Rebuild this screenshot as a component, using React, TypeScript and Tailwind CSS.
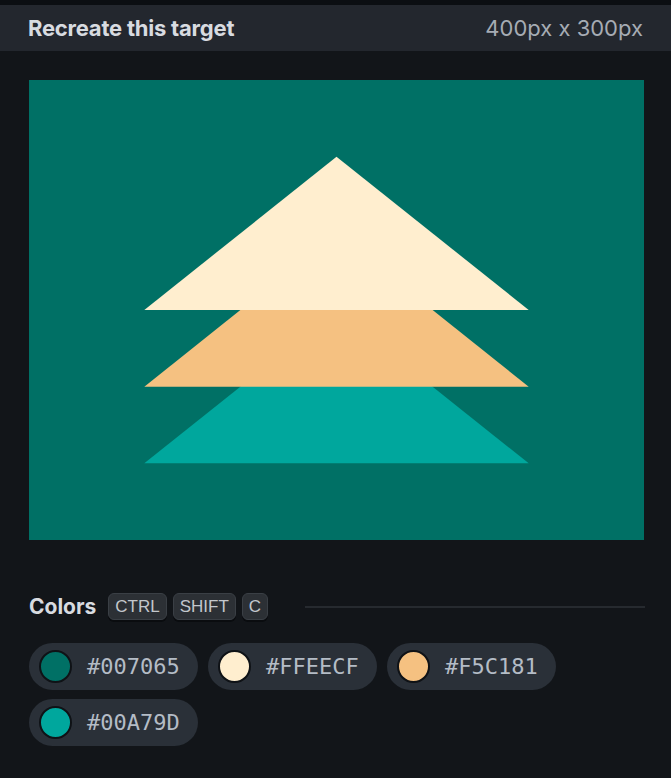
const colors = ["#007065", "#FFEECF", "#F5C181", "#00A79D"];

const keys = ["CTRL", "SHIFT", "C"];

const Target = () => (
  <svg
    viewBox="0 0 400 300"
    preserveAspectRatio="none"
    className="block w-[615px] h-[460px]"
  >
    <rect width="400" height="300" fill="#007065" />
    <polygon points="200,150 325,250 75,250" fill="#00A79D" />
    <polygon points="200,100 325,200 75,200" fill="#F5C181" />
    <polygon points="200,50 325,150 75,150" fill="#FFEECF" />
  </svg>
);

const Swatch = ({ hex }: { hex: string }) => (
  <div className="flex items-center h-[47px] w-[169px] pl-[10px] rounded-full bg-[#2a3038]">
    <span
      className="w-[33px] h-[33px] rounded-full border-2 border-[#0f1216]"
      style={{ backgroundColor: hex }}
    />
    <span className="ml-[15px] font-['DejaVu_Sans_Mono',monospace] text-[22px] text-[#b4bcc6]">
      {hex}
    </span>
  </div>
);

export default function App() {
  return (
    <div className="w-[671px] h-[778px] bg-[#121519] font-['Inter',sans-serif]">
      <div className="h-[5px] bg-[#0b0e12]" />
      <header className="flex items-center justify-between h-[46px] px-[28px] bg-[#23272e]">
        <h1 className="text-[22px] font-bold tracking-[-0.01em] text-[#d8dbe0]">
          Recreate this target
        </h1>
        <span className="text-[22px] text-[#a6acb4]">400px x 300px</span>
      </header>

      <div className="pt-[29px] pl-[29px]">
        <Target />
      </div>

      <div className="flex items-center mt-[51px] pl-[29px] pr-[26px]">
        <span className="text-[21px] font-bold text-[#d8dbe0]">Colors</span>
        <div className="flex gap-[6px] ml-[12px]">
          {keys.map((k) => (
            <kbd
              key={k}
              className="h-[27px] px-[6px] flex items-center rounded-[6px] bg-[#2c3035] border border-[#3a3f45] shadow-[0_2px_0_#0a0c0f] font-['Liberation_Sans',sans-serif] text-[17px] text-[#c3c7cc]"
            >
              {k}
            </kbd>
          ))}
        </div>
        <div className="flex-1 ml-[37px] h-[2px] bg-[#262a2f]" />
      </div>

      <div className="flex flex-wrap gap-x-[10px] gap-y-[9px] mt-[20px] pl-[29px] w-[620px]">
        {colors.map((c) => (
          <Swatch key={c} hex={c} />
        ))}
      </div>
    </div>
  );
}
